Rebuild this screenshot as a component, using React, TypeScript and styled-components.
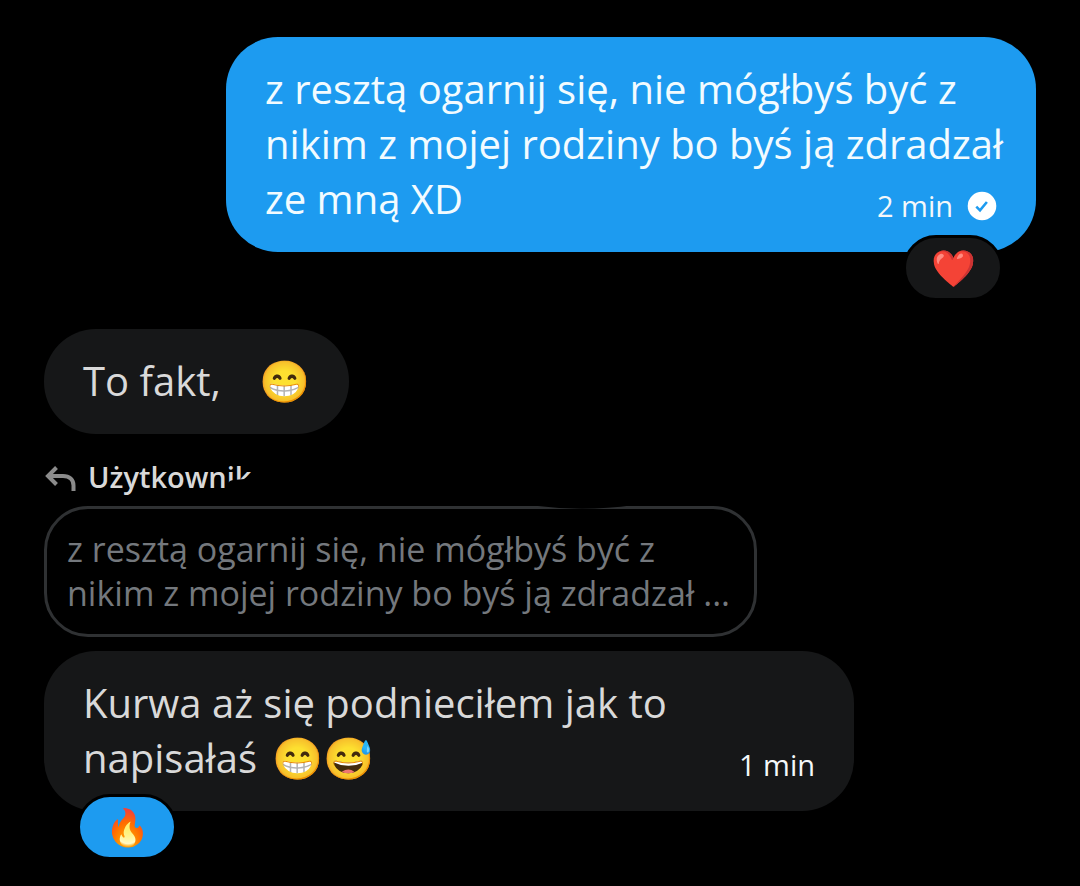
import React from "react";
import styled, { createGlobalStyle, css } from "styled-components";

const GlobalStyle = createGlobalStyle`
  *, *::before, *::after { box-sizing: border-box; }
  body {
    margin: 0;
    background: #000;
    color: #d9d9d9;
    font-family: "Open Sans", "Noto Sans", sans-serif;
  }
`;

type Side = "sent" | "received";

const Conversation = styled.main`
  display: flex;
  flex-direction: column;
  align-items: flex-start;
  min-height: 100vh;
  padding: 37px 0 60px;
`;

const Bubble = styled.article<{ $side: Side; $compact?: boolean; $gap?: number }>`
  position: relative;
  display: grid;
  grid-template-columns: ${(p) => (p.$compact ? "auto" : "minmax(0, 1fr)")};
  width: ${(p) => (p.$compact ? "auto" : "75%")};
  margin: ${(p) => p.$gap ?? 0}px 44px 0;
  padding: 24px 39px 26px;
  border-radius: 52px;
  ${(p) =>
    p.$side === "sent"
      ? css`
          align-self: flex-end;
          background: #1d9bf0;
          color: #f2fbff;
        `
      : css`
          background: #161718;
          color: #d9d9d9;
        `}
`;

const Message = styled.p`
  grid-area: 1 / 1;
  margin: 0;
  font-size: 40px;
  line-height: 55px;
  white-space: nowrap;
`;

const Emoji = styled.span<{ $gap?: number }>`
  margin-left: ${(p) => p.$gap ?? 0}px;
  font-size: 41px;
  line-height: 1;
`;

const Meta = styled.div`
  grid-area: 1 / 1;
  align-self: end;
  justify-self: end;
  display: flex;
  align-items: center;
  gap: 14px;
  font-size: 29px;
  line-height: 40px;
  color: #f4f8fa;
`;

const Reaction = styled.button<{ $side: Side }>`
  position: absolute;
  bottom: -49px;
  ${(p) => (p.$side === "sent" ? "right" : "left")}: 33px;
  display: flex;
  align-items: center;
  justify-content: center;
  width: 100px;
  height: 66px;
  padding: 0;
  border: 3px solid #000;
  border-radius: 33px;
  background: ${(p) => (p.$side === "sent" ? "#161718" : "#1d9bf0")};
  font-family: inherit;
  font-size: 36px;
  line-height: 44px;
`;

const Reply = styled.section`
  position: relative;
  display: flex;
  flex-direction: column;
  align-items: flex-start;
  margin: 24px 44px 0;
`;

const ReplyAuthor = styled.div`
  display: flex;
  align-items: center;
  gap: 12px;
  margin-bottom: 10px;
  font-size: 29px;
  font-weight: 600;
  line-height: 38px;
`;

const Quote = styled.blockquote`
  margin: 0;
  padding: 18px 24px 19px 20px;
  border: 3px solid #2f3133;
  border-radius: 44px;
  color: #74787d;
  font-size: 34px;
  line-height: 44px;
  white-space: nowrap;
`;

const Eraser = styled.svg`
  position: absolute;
  top: 0;
  left: 176px;
  pointer-events: none;
`;

const SentBadge = () => (
  <svg width="30" height="30" viewBox="0 0 30 30" role="img" aria-label="Wysłano">
    <circle cx="15" cy="15" r="14.3" fill="#fff" />
    <path d="M9.3 15.6l3.7 3.7 6.9-8.3" fill="none" stroke="#1d9bf0" strokeWidth="2.6" />
  </svg>
);

const ReplyArrow = () => (
  <svg width="32" height="32" viewBox="0 0 32 32" aria-hidden="true">
    <path
      d="M12.500 6.500L4 15l8.500 8.500M4.500 15H19c6.500 0 10.500 3.500 10.500 9.500V30"
      fill="none"
      stroke="#8b8b8b"
      strokeWidth="4"
    />
  </svg>
);

export default function App() {
  return (
    <>
      <GlobalStyle />
      <Conversation>
        <Bubble $side="sent">
          <Message>
            z resztą ogarnij się, nie mógłbyś być z<br />
            nikim z mojej rodziny bo byś ją zdradzał<br />
            ze mną XD
          </Message>
          <Meta>
            <time>2 min</time>
            <SentBadge />
          </Meta>
          <Reaction $side="sent">❤️</Reaction>
        </Bubble>

        <Bubble $side="received" $compact $gap={77}>
          <Message>
            To fakt,<Emoji $gap={38}>😁</Emoji>
          </Message>
        </Bubble>

        <Reply>
          <ReplyAuthor>
            <ReplyArrow />
            <span>Użytkownik</span>
          </ReplyAuthor>
          <Quote>
            z resztą ogarnij się, nie mógłbyś być z<br />
            nikim z mojej rodziny bo byś ją zdradzał ...
          </Quote>
          <Eraser width="420" height="52" viewBox="0 0 420 52" aria-hidden="true">
            <path d="M3 35L8 25Q10 22 14 22L24 21Q29 18 33 13V40H3Z" fill="#000" />
            <path d="M318 47H414Q365 54 318 48Z" fill="#000" />
          </Eraser>
        </Reply>

        <Bubble $side="received" $gap={14}>
          <Message>
            Kurwa aż się podnieciłem jak to
            <br />
            napisałaś <Emoji $gap={5}>😁😅</Emoji>
          </Message>
          <Meta>
            <time>1 min</time>
          </Meta>
          <Reaction $side="received">🔥</Reaction>
        </Bubble>
      </Conversation>
    </>
  );
}
